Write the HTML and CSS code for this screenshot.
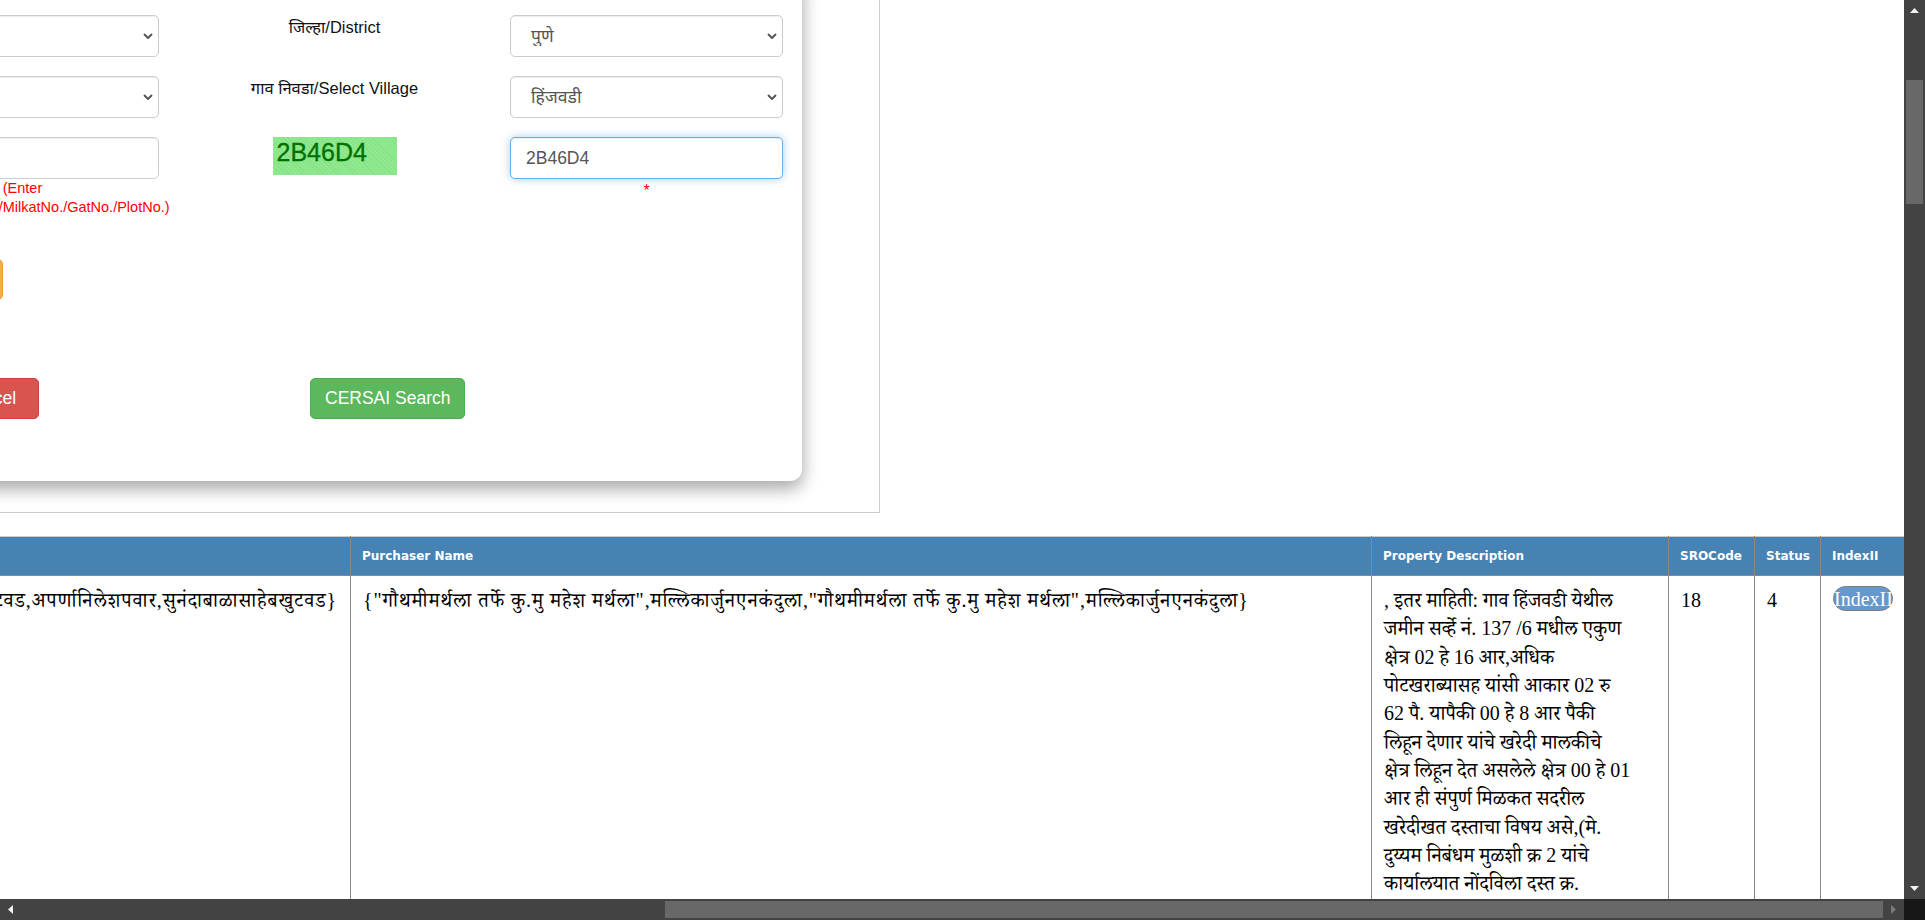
FILE: index.html
```html
<!DOCTYPE html>
<html lang="mr">
<head>
<meta charset="utf-8">
<title>मालमत्ता शोध / Property Search</title>
<link rel="stylesheet" href="styles.css">
</head>
<body>
<div class="viewport">
  <div class="page">
    <div class="panel">
      <div class="card">
        <div class="form-grid">
          <label class="lbl">विभाग/Division</label>
          <div class="select-wrap">
            <select class="control select"><option>पुणे विभाग</option></select>
            <svg class="chev" width="10" height="6" viewBox="0 0 10 6"><path d="M1 1l4 4 4-4" fill="none" stroke="#555" stroke-width="2"/></svg>
          </div>
          <label class="lbl">जिल्हा/District</label>
          <div class="select-wrap">
            <select class="control select"><option>पुणे</option></select>
            <svg class="chev" width="10" height="6" viewBox="0 0 10 6"><path d="M1 1l4 4 4-4" fill="none" stroke="#555" stroke-width="2"/></svg>
          </div>

          <label class="lbl">तालुका/Taluka</label>
          <div class="select-wrap">
            <select class="control select"><option>मुळशी</option></select>
            <svg class="chev" width="10" height="6" viewBox="0 0 10 6"><path d="M1 1l4 4 4-4" fill="none" stroke="#555" stroke-width="2"/></svg>
          </div>
          <label class="lbl">गाव निवडा/Select Village</label>
          <div class="select-wrap">
            <select class="control select"><option>हिंजवडी</option></select>
            <svg class="chev" width="10" height="6" viewBox="0 0 10 6"><path d="M1 1l4 4 4-4" fill="none" stroke="#555" stroke-width="2"/></svg>
          </div>

          <label class="lbl">मिळकत क्र./Property No.</label>
          <div class="field">
            <input class="control" type="text" value="">
            <div class="note">(Enter<br>CTSNo./SurveyNo./MilkatNo./GatNo./PlotNo.)</div>
          </div>
          <div class="captcha-cell"><div class="captcha">2B46D4</div></div>
          <div class="field">
            <input class="control focused" type="text" value="2B46D4">
            <div class="req">*</div>
          </div>
        </div>

        <div class="row-top">
          <button class="btn btn-warning btn-refresh" type="button">Refresh</button>
        </div>

        <div class="row-buttons">
          <button class="btn btn-danger btn-cancel" type="button">Cancel</button>
          <button class="btn btn-success" type="button">CERSAI Search</button>
        </div>
      </div>
    </div>

    <table class="results">
      <colgroup>
        <col class="c-seller">
        <col class="c-buyer">
        <col class="c-desc">
        <col class="c-sro">
        <col class="c-status">
        <col class="c-index">
      </colgroup>
      <thead>
        <tr>
          <th>Seller Name</th>
          <th>Purchaser Name</th>
          <th>Property Description</th>
          <th>SROCode</th>
          <th>Status</th>
          <th>IndexII</th>
        </tr>
      </thead>
      <tbody>
        <tr>
          <td class="seller"><span>{बाळासाहेबखुटवड,अपर्णानिलेशपवार,सुनंदाबाळासाहेबखुटवड}</span></td>
          <td class="buyer">{"गौथमीमर्थला तर्फे कु.मु महेश मर्थला",मल्लिकार्जुनएनकंदुला,"गौथमीमर्थला तर्फे कु.मु महेश मर्थला",मल्लिकार्जुनएनकंदुला}</td>
          <td class="desc">, इतर माहिती: गाव हिंजवडी येथील<br>जमीन सर्व्हे नं. 137 /6 मधील एकुण<br>क्षेत्र 02 हे 16 आर,अधिक<br>पोटखराब्यासह यांसी आकार 02 रु<br>62 पै. यापैकी 00 हे 8 आर पैकी<br>लिहून देणार यांचे खरेदी मालकीचे<br>क्षेत्र लिहून देत असलेले क्षेत्र 00 हे 01<br>आर ही संपुर्ण मिळकत सदरील<br>खरेदीखत दस्ताचा विषय असे,(मे.<br>दुय्यम निबंधम मुळशी क्र 2 यांचे<br>कार्यालयात नोंदविला दस्त क्र.<br>1234/2019 दिनांक<br>12/03/2019)</td>
          <td>18</td>
          <td>4</td>
          <td><button class="idx-btn" type="button">IndexII</button></td>
        </tr>
      </tbody>
    </table>
  </div>
</div>

<div class="vscroll">
  <div class="sb-btn"><svg width="9" height="5" viewBox="0 0 9 5"><path d="M0 5L4.5 0L9 5Z" fill="#f2f2f2"/></svg></div>
  <div class="vtrack"><div class="vthumb"></div></div>
  <div class="sb-btn"><svg width="9" height="5" viewBox="0 0 9 5"><path d="M0 0L4.5 5L9 0Z" fill="#f2f2f2"/></svg></div>
</div>
<div class="hscroll">
  <div class="sb-btn sb-h"><svg width="5" height="9" viewBox="0 0 5 9"><path d="M5 0L0 4.5L5 9Z" fill="#f2f2f2"/></svg></div>
  <div class="htrack"><div class="hthumb"></div></div>
  <div class="sb-btn sb-h"><svg width="5" height="9" viewBox="0 0 5 9"><path d="M0 0L5 4.5L0 9Z" fill="#7a7a7a"/></svg></div>
</div>
<div class="corner"></div>
</body>
</html>
```

FILE: styles.css
```css
* { box-sizing: border-box; }
html, body { margin: 0; padding: 0; }
body {
  width: 1925px;
  height: 920px;
  overflow: hidden;
  display: grid;
  grid-template-columns: 1904px 21px;
  grid-template-rows: 899px 21px;
  background: #fff;
  font-family: "Liberation Sans", Arial, "Noto Sans Devanagari", sans-serif;
  color: #333;
}

.viewport { overflow: hidden; background: #fff; }
.page { margin: -26px 0 0 -500px; }

.panel {
  width: 1380px;
  border: 1px solid #ccc;
  padding: 0 77px 31px;
}
.card {
  background: #fff;
  border-radius: 12px;
  box-shadow: 0 8px 16px rgba(0,0,0,0.2), 0 6px 20px rgba(0,0,0,0.19);
  padding: 40px 19px 62px;
}

.form-grid {
  display: grid;
  grid-template-columns: 289px 273px 351px 273px;
  row-gap: 19px;
  align-items: start;
}
.lbl {
  font-size: 16.5px;
  line-height: 24px;
  text-align: center;
  color: #111;
}
.control {
  display: block;
  width: 100%;
  height: 42px;
  border: 1px solid #ccc;
  border-radius: 5px;
  background: #fff;
  font-family: "Liberation Sans", Arial, "Noto Sans Devanagari", sans-serif;
  font-size: 17.5px;
  color: #555;
  padding: 0 15px;
  box-shadow: inset 0 1px 1px rgba(0,0,0,0.075);
}
.select {
  appearance: none;
  -webkit-appearance: none;
  padding-left: 20px;
}
.select-wrap { position: relative; }
.chev { position: absolute; right: 6px; top: 18px; }
.control.focused {
  border-color: #66afe9;
  outline: 0;
  box-shadow: inset 0 1px 1px rgba(0,0,0,0.075), 0 0 8px rgba(102,175,233,0.6);
}
.note {
  margin: 0 -40px;
  color: #f00;
  font-size: 14.5px;
  line-height: 19px;
  text-align: center;
}
.req {
  color: #f00;
  font-size: 16px;
  line-height: 19px;
  padding-top: 2px;
  text-align: center;
}
.captcha-cell { display: flex; justify-content: center; }
.captcha {
  width: 124px;
  height: 38px;
  padding: 3px 0 0 4px;
  background-color: #8fe98f;
  background-image: repeating-linear-gradient(45deg, rgba(0,90,0,0.06) 0 1px, transparent 1px 3px);
  color: #007000;
  font-family: "Liberation Sans", Arial, sans-serif;
  font-size: 25px;
  line-height: 1;
  -webkit-text-stroke: 0.3px #007000;
}

.btn {
  display: inline-flex;
  align-items: center;
  justify-content: center;
  height: 41px;
  padding: 0 14px;
  border: 1px solid transparent;
  border-radius: 5px;
  font-family: "Liberation Sans", Arial, sans-serif;
  font-size: 17.5px;
  color: #fff;
  white-space: nowrap;
}
.btn-warning { background: #f0ad4e; border-color: #eea236; }
.btn-danger { background: #d9534f; border-color: #d43f3a; }
.btn-success { background: #5cb85c; border-color: #4cae4c; }
.row-top { display: flex; margin-top: 42px; }
.btn-refresh { width: 140px; margin-left: 266px; }
.row-buttons { display: flex; gap: 271px; margin-top: 78px; }
.btn-cancel { width: 100px; margin-left: 342px; }

.results {
  width: 100%;
  margin-top: 23px;
  border-collapse: collapse;
  table-layout: fixed;
}
.c-seller { width: 850px; }
.c-buyer { width: 1021px; }
.c-desc { width: 297px; }
.c-sro { width: 86px; }
.c-status { width: 66px; }
.c-index { width: 84px; }

.results th {
  height: 39px;
  padding: 0 11px;
  background: #4682b4;
  color: #fff;
  font-family: "DejaVu Sans", Verdana, sans-serif;
  font-size: 12px;
  font-weight: bold;
  text-align: left;
  vertical-align: middle;
  border: 1px solid #888;
  border-top-color: #ccc;
}
.results td {
  padding: 10px 12px;
  font-family: "Liberation Serif", "Times New Roman", "Noto Serif Devanagari", "Noto Sans Devanagari", serif;
  font-size: 20px;
  line-height: 28.33px;
  color: #000;
  vertical-align: top;
  border: 1px solid #888;
}
.results td.seller {
  text-align: right;
  white-space: nowrap;
  padding-right: 13px;
  overflow: hidden;
}
.results td.seller span,
.results td.buyer { letter-spacing: 0.9px; }
.results td.desc { white-space: nowrap; }
.idx-btn {
  display: block;
  width: 60px;
  height: 25px;
  padding: 0;
  border: 1px solid #7d7d7d;
  border-radius: 13px;
  background: #6598cc;
  color: #fff;
  font-family: "Liberation Serif", "Times New Roman", serif;
  font-size: 20px;
  line-height: 22px;
  white-space: nowrap;
  overflow: visible;
}

.vscroll {
  background: #434343;
  display: flex;
  flex-direction: column;
}
.sb-btn {
  flex: none;
  height: 21px;
  display: flex;
  align-items: center;
  justify-content: center;
}
.vtrack { flex: 1; }
.vthumb { margin: 59px 2px 0; height: 124px; background: #686868; }
.hscroll {
  background: #434343;
  display: flex;
}
.sb-h { width: 21px; height: 21px; }
.htrack { flex: 1; }
.hthumb { margin: 2px 0 0 644px; width: 1218px; height: 17px; background: #686868; }
.corner { background: #171717; }
```
